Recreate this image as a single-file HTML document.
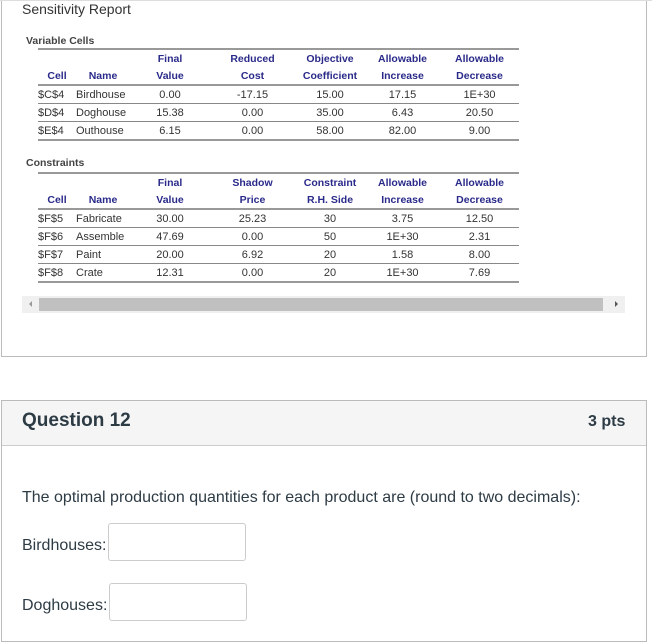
<!DOCTYPE html>
<html><head><style>
body{margin:0;width:652px;height:626px;background:#fff;position:relative;overflow:hidden;font-family:"Liberation Sans",sans-serif;}
.abs{position:absolute;}
table{position:absolute;border-collapse:collapse;font-size:11px;color:#333;table-layout:fixed;}
td{padding:0;text-align:center;white-space:nowrap;}
tr.h td{color:#2a2a8a;font-weight:bold;height:17px;font-size:10.5px;}
tr.d td{height:17px;border-bottom:1px solid #888;}
tr.t td{border-top:2px solid #999;}
tr.hl td{border-bottom:2px solid #999;}
tr.last td{border-bottom:2px solid #999;}
td.l{text-align:left;}
</style></head><body>
<div class="abs" style="left:1px;top:0;width:644px;height:356px;border:1px solid #bbb;border-top:none;"></div>
<div class="abs" style="left:0;top:0;width:652px;height:1px;background:#ddd;"></div>
<div class="abs" style="left:22px;top:1px;font-size:14px;color:#333;">Sensitivity Report</div>
<div class="abs" style="left:26px;top:35px;font-size:10.5px;color:#444;font-weight:bold;">Variable Cells</div>
<table style="left:38px;top:48px;width:481px;">
<colgroup><col style="width:38px"><col style="width:54px"><col style="width:80px"><col style="width:85px"><col style="width:70px"><col style="width:75px"><col style="width:79px"></colgroup>
<tr class="h t"><td></td><td></td><td>Final</td><td>Reduced</td><td>Objective</td><td>Allowable</td><td>Allowable</td></tr>
<tr class="h hl"><td>Cell</td><td>Name</td><td>Value</td><td>Cost</td><td>Coefficient</td><td>Increase</td><td>Decrease</td></tr>
<tr class="d"><td class="l">$C$4</td><td class="l">Birdhouse</td><td>0.00</td><td>-17.15</td><td>15.00</td><td>17.15</td><td>1E+30</td></tr>
<tr class="d"><td class="l">$D$4</td><td class="l">Doghouse</td><td>15.38</td><td>0.00</td><td>35.00</td><td>6.43</td><td>20.50</td></tr>
<tr class="d last"><td class="l">$E$4</td><td class="l">Outhouse</td><td>6.15</td><td>0.00</td><td>58.00</td><td>82.00</td><td>9.00</td></tr>
</table>
<div class="abs" style="left:26px;top:157px;font-size:10.5px;color:#444;font-weight:bold;">Constraints</div>
<table style="left:38px;top:172px;width:481px;">
<colgroup><col style="width:38px"><col style="width:54px"><col style="width:80px"><col style="width:85px"><col style="width:70px"><col style="width:75px"><col style="width:79px"></colgroup>
<tr class="h t"><td></td><td></td><td>Final</td><td>Shadow</td><td>Constraint</td><td>Allowable</td><td>Allowable</td></tr>
<tr class="h hl"><td>Cell</td><td>Name</td><td>Value</td><td>Price</td><td>R.H. Side</td><td>Increase</td><td>Decrease</td></tr>
<tr class="d"><td class="l">$F$5</td><td class="l">Fabricate</td><td>30.00</td><td>25.23</td><td>30</td><td>3.75</td><td>12.50</td></tr>
<tr class="d"><td class="l">$F$6</td><td class="l">Assemble</td><td>47.69</td><td>0.00</td><td>50</td><td>1E+30</td><td>2.31</td></tr>
<tr class="d"><td class="l">$F$7</td><td class="l">Paint</td><td>20.00</td><td>6.92</td><td>20</td><td>1.58</td><td>8.00</td></tr>
<tr class="d last"><td class="l">$F$8</td><td class="l">Crate</td><td>12.31</td><td>0.00</td><td>20</td><td>1E+30</td><td>7.69</td></tr>
</table>
<div class="abs" style="left:22px;top:296px;width:603px;height:17px;background:#f0f0f0;"></div>
<div class="abs" style="left:39px;top:298px;width:564px;height:13px;background:#c0c0c0;"></div>
<div class="abs" style="left:29px;top:301px;width:0;height:0;border-top:3px solid transparent;border-bottom:3px solid transparent;border-right:3px solid #999;"></div>
<div class="abs" style="left:615px;top:301px;width:0;height:0;border-top:3px solid transparent;border-bottom:3px solid transparent;border-left:3px solid #555;"></div>

<div class="abs" style="left:1px;top:400px;width:644px;height:240px;border:1px solid #bbb;"></div>
<div class="abs" style="left:2px;top:401px;width:644px;height:44px;background:#f5f5f5;border-bottom:1px solid #ccc;"></div>
<div class="abs" style="left:22px;top:410px;font-size:19px;font-weight:bold;color:#2d3b45;">Question 12</div>
<div class="abs" style="left:588px;top:413px;font-size:16px;font-weight:bold;color:#2d3b45;">3 pts</div>
<div class="abs" style="left:22px;top:489px;font-size:16px;color:#2d3b45;">The optimal production quantities for each product are (round to two decimals):</div>
<div class="abs" style="left:22px;top:537px;font-size:16px;color:#2d3b45;">Birdhouses:</div>
<div class="abs" style="left:108px;top:523px;width:136px;height:36px;border:1px solid #ccc;border-radius:3px;"></div>
<div class="abs" style="left:22px;top:597px;font-size:16px;color:#2d3b45;">Doghouses:</div>
<div class="abs" style="left:109px;top:583px;width:136px;height:36px;border:1px solid #ccc;border-radius:3px;"></div>
</body></html>
